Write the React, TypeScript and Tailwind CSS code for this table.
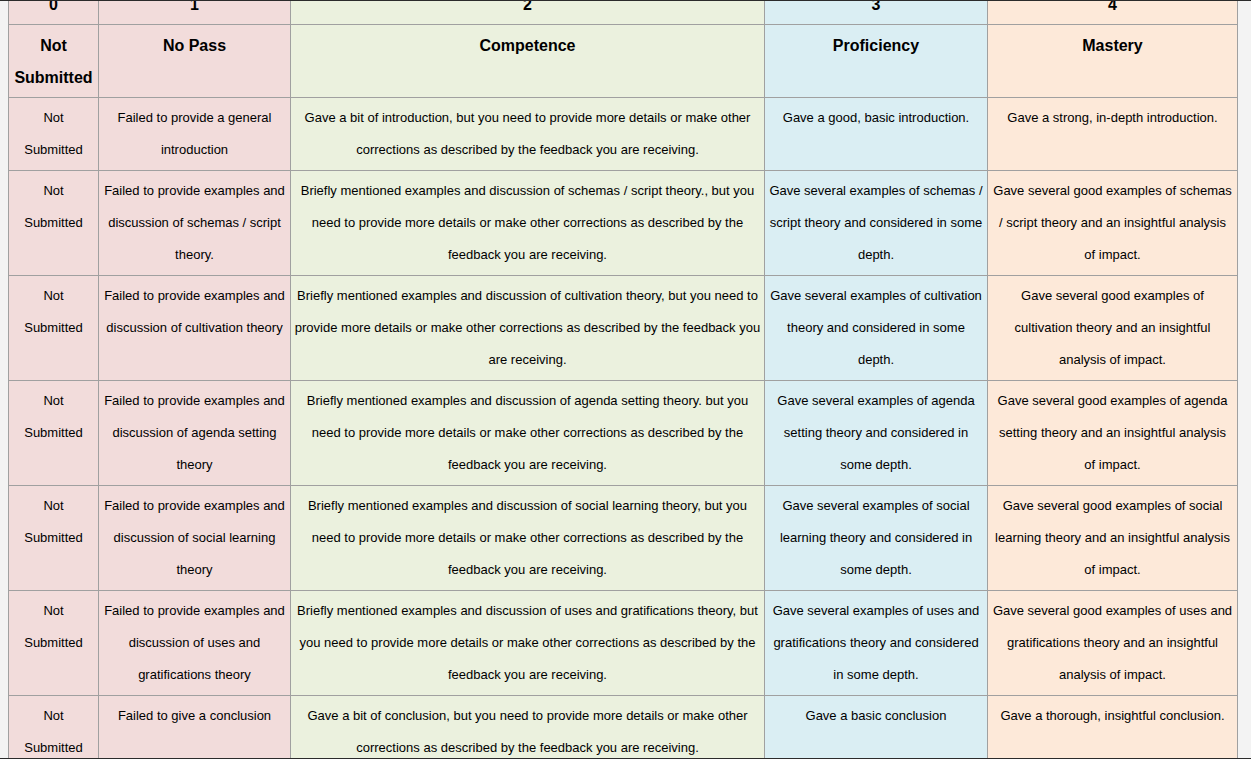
const levels = [
  { num: '0', title: 'Not Submitted', bg: 'bg-[#f2dcdb]', pad: 'px-1' },
  { num: '1', title: 'No Pass', bg: 'bg-[#f2dcdb]', pad: 'px-1' },
  { num: '2', title: 'Competence', bg: 'bg-[#ebf1de]', pad: 'px-[3px]' },
  { num: '3', title: 'Proficiency', bg: 'bg-[#daeef3]', pad: 'px-1' },
  { num: '4', title: 'Mastery', bg: 'bg-[#fde9d9]', pad: 'px-[4.5px]' },
];

const feedback = 'you need to provide more details or make other corrections as described by the feedback you are receiving.';

const rows: string[][] = [
  [
    'Not Submitted',
    'Failed to provide a general introduction',
    'Gave a bit of introduction, but you need to provide more details or make other corrections as described by the feedback you are receiving.',
    'Gave a good, basic introduction.',
    'Gave a strong, in-depth introduction.',
  ],
  [
    'Not Submitted',
    'Failed to provide examples and discussion of schemas / script theory.',
    `Briefly mentioned examples and discussion of schemas / script theory., but ${feedback}`,
    'Gave several examples of schemas / script theory and considered in some depth.',
    'Gave several good examples of schemas / script theory and an insightful analysis of impact.',
  ],
  [
    'Not Submitted',
    'Failed to provide examples and discussion of cultivation theory',
    `Briefly mentioned examples and discussion of cultivation theory, but ${feedback}`,
    'Gave several examples of cultivation theory and considered in some depth.',
    'Gave several good examples of cultivation theory and an insightful analysis of impact.',
  ],
  [
    'Not Submitted',
    'Failed to provide examples and discussion of agenda setting theory',
    `Briefly mentioned examples and discussion of agenda setting theory. but ${feedback}`,
    'Gave several examples of agenda setting theory and considered in some depth.',
    'Gave several good examples of agenda setting theory and an insightful analysis of impact.',
  ],
  [
    'Not Submitted',
    'Failed to provide examples and discussion of social learning theory',
    `Briefly mentioned examples and discussion of social learning theory, but ${feedback}`,
    'Gave several examples of social learning theory and considered in some depth.',
    'Gave several good examples of social learning theory and an insightful analysis of impact.',
  ],
  [
    'Not Submitted',
    'Failed to provide examples and discussion of uses and gratifications theory',
    `Briefly mentioned examples and discussion of uses and gratifications theory, but ${feedback}`,
    'Gave several examples of uses and gratifications theory and considered in some depth.',
    'Gave several good examples of uses and gratifications theory and an insightful analysis of impact.',
  ],
  [
    'Not Submitted',
    'Failed to give a conclusion',
    'Gave a bit of conclusion, but you need to provide more details or make other corrections as described by the feedback you are receiving.',
    'Gave a basic conclusion',
    'Gave a thorough, insightful conclusion.',
  ],
];

export default function App() {
  return (
    <div className="h-[759px] overflow-hidden bg-[#f3f3f3] border-y border-[#2b2b2b] font-['Liberation_Sans',Arial,sans-serif] text-black">
      <div className="pl-2 -mt-[18px]">
        <table className="table-fixed border-collapse w-[1229px] text-center">
          <colgroup>
            <col className="w-[90px]" />
            <col className="w-[192px]" />
            <col className="w-[474px]" />
            <col className="w-[223px]" />
            <col className="w-[250px]" />
          </colgroup>
          <thead>
            <tr>
              {levels.map((l) => (
                <th key={l.num} className={`${l.bg} border border-[#a0a0a0] px-1 pt-[5px] pb-[3px] text-base leading-8 font-bold align-top`}>
                  {l.num}
                </th>
              ))}
            </tr>
            <tr>
              {levels.map((l) => (
                <th key={l.title} className={`${l.bg} border border-[#a0a0a0] px-1 pt-[5px] pb-[3px] text-base leading-8 font-bold align-top`}>
                  {l.title}
                </th>
              ))}
            </tr>
          </thead>
          <tbody>
            {rows.map((r, i) => (
              <tr key={i}>
                {r.map((cell, j) => (
                  <td key={j} className={`${levels[j].bg} ${levels[j].pad} border border-[#a0a0a0] py-1 text-[13px] leading-8 align-top`}>
                    {cell}
                  </td>
                ))}
              </tr>
            ))}
          </tbody>
        </table>
      </div>
    </div>
  );
}
